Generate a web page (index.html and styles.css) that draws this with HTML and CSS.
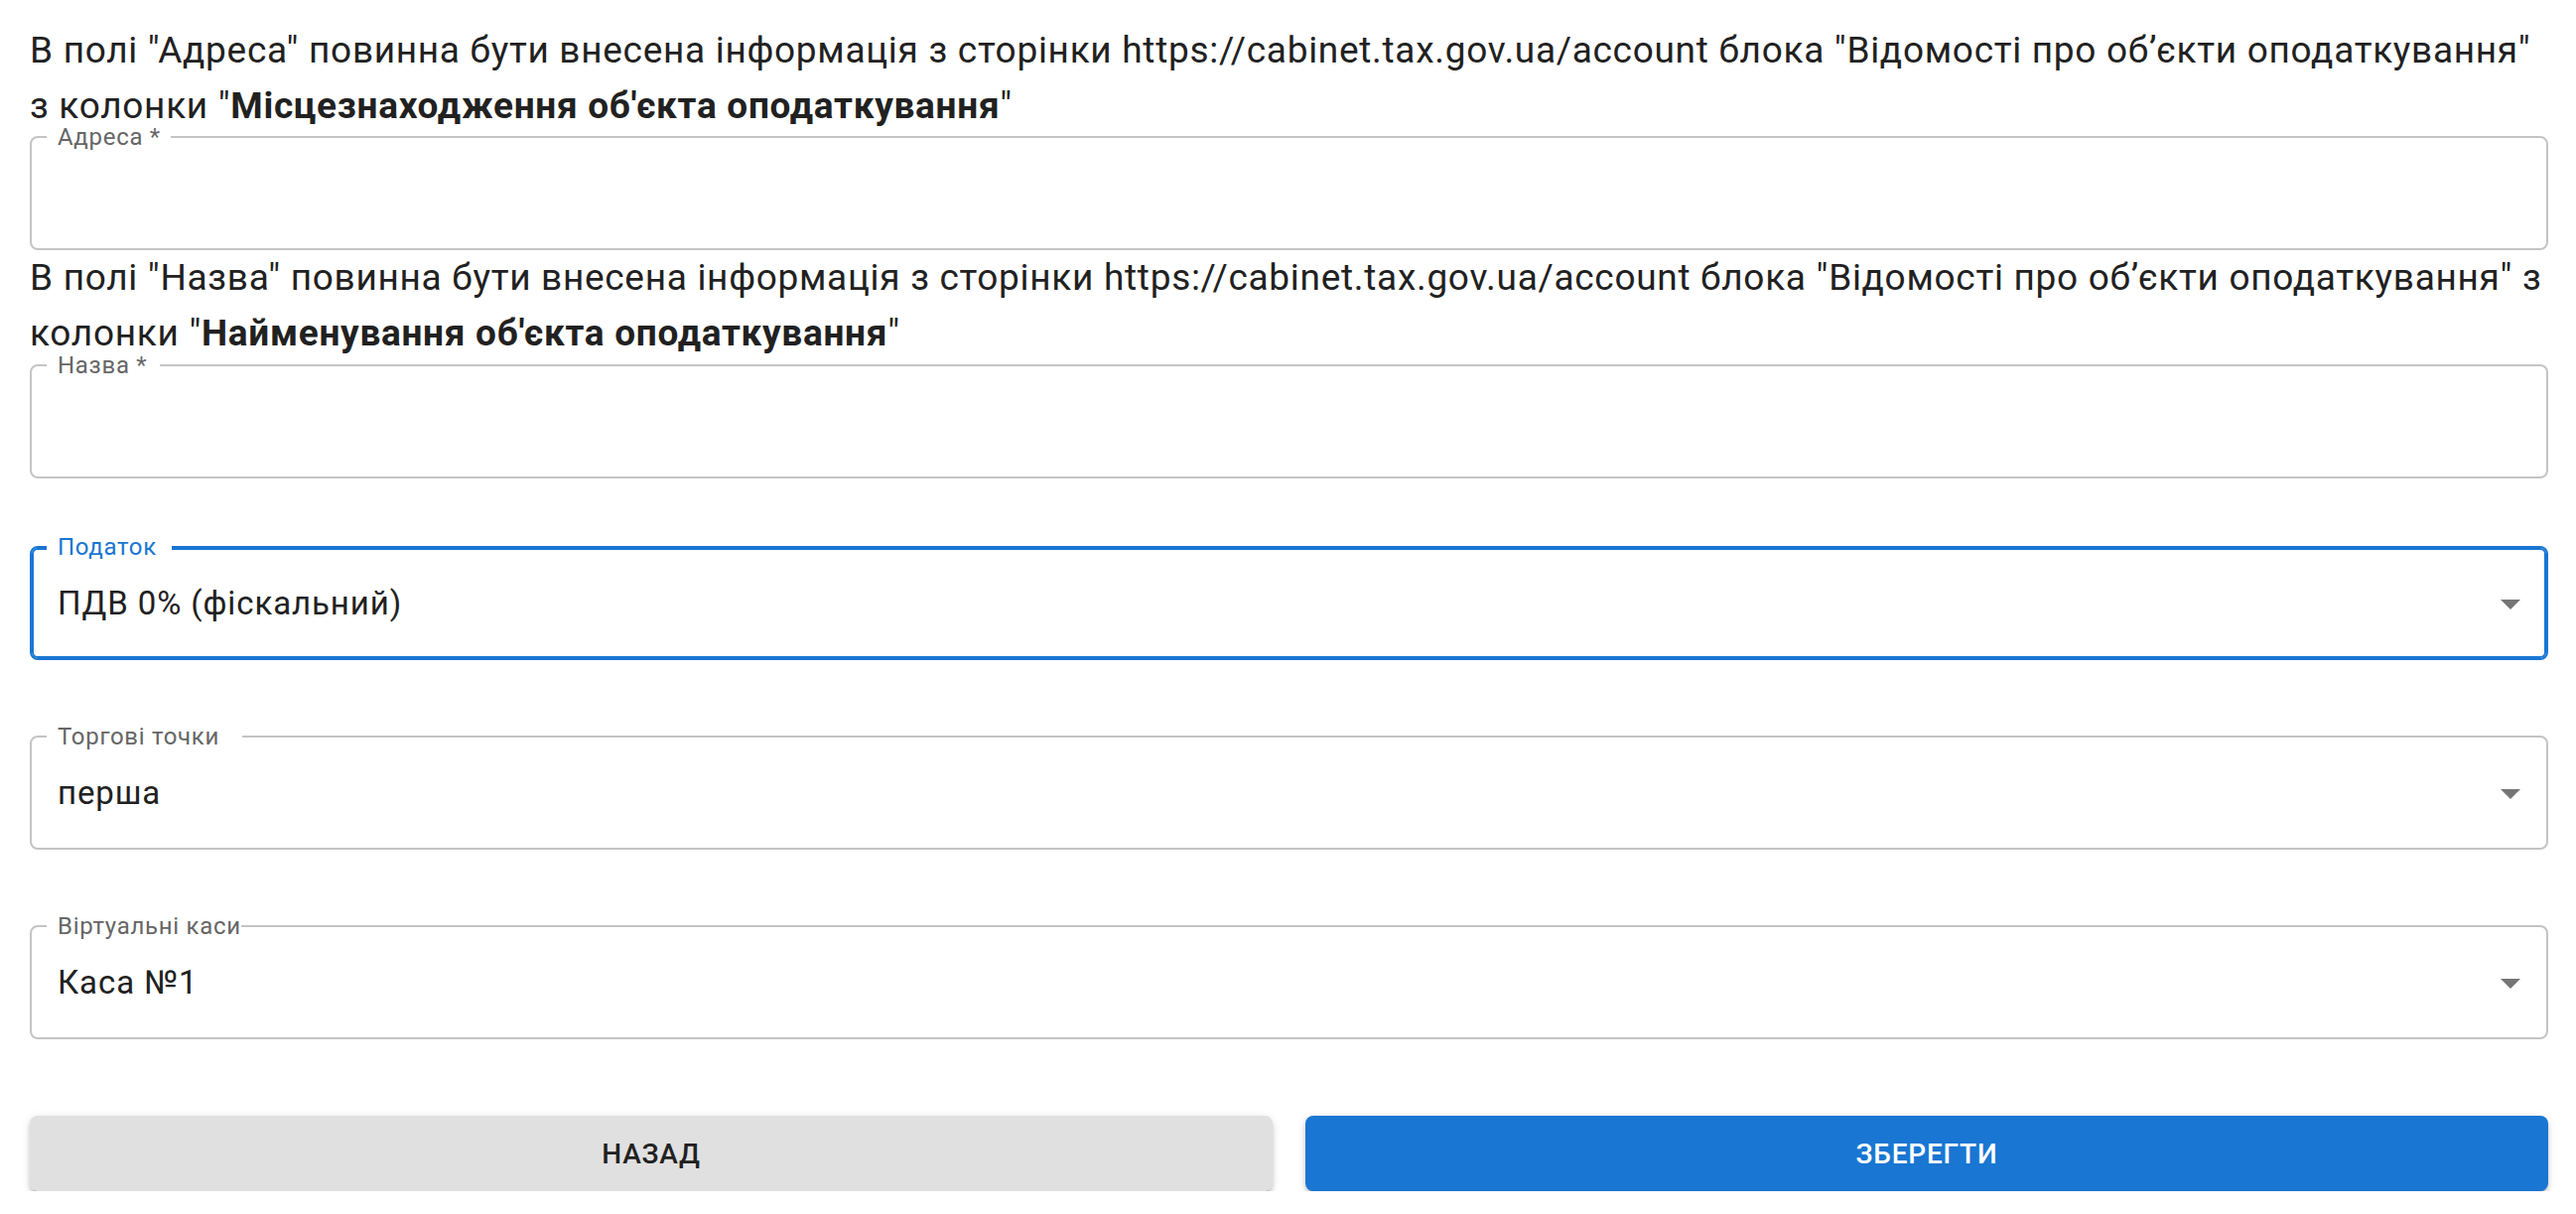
FILE: index.html
```html
<!DOCTYPE html>
<html lang="uk">
<head>
<meta charset="utf-8">
<title>Форма</title>
<link rel="stylesheet" href="styles.css">
</head>
<body>
<div class="page">
  <p class="hint">В полі "Адреса" повинна бути внесена інформація з сторінки https://cabinet.tax.gov.ua/account блока "Відомості про об’єкти оподаткування" з колонки "<b>Місцезнаходження об'єкта оподаткування</b>"</p>
  <div class="field field-tight">
    <span class="field-label label-pad-10">Адреса *</span>
  </div>

  <p class="hint">В полі "Назва" повинна бути внесена інформація з сторінки https://cabinet.tax.gov.ua/account блока "Відомості про об’єкти оподаткування" з колонки "<b>Найменування об'єкта оподаткування</b>"</p>
  <div class="field field-tight2">
    <span class="field-label label-pad-13">Назва *</span>
  </div>

  <div class="field select focused first-select">
    <span class="field-label label-pad-15">Податок</span>
    <span class="value">ПДВ 0% (фіскальний)</span>
    <svg class="arrow" viewBox="0 0 24 24" width="48" height="48"><path d="M7 10l5 5 5-5z"/></svg>
  </div>

  <div class="field select next-select">
    <span class="field-label label-pad-23">Торгові точки</span>
    <span class="value">перша</span>
    <svg class="arrow" viewBox="0 0 24 24" width="48" height="48"><path d="M7 10l5 5 5-5z"/></svg>
  </div>

  <div class="field select next-select">
    <span class="field-label label-pad-0">Віртуальні каси</span>
    <span class="value">Каса №1</span>
    <svg class="arrow" viewBox="0 0 24 24" width="48" height="48"><path d="M7 10l5 5 5-5z"/></svg>
  </div>

  <div class="actions">
    <button class="btn btn-grey" type="button">Назад</button>
    <button class="btn btn-primary" type="button">Зберегти</button>
  </div>
</div>
</body>
</html>
```

FILE: styles.css
```css
html, body {
  margin: 0;
  padding: 0;
  background: #ffffff;
}

body {
  font-family: Roboto, "Noto Sans", "Liberation Sans", sans-serif;
  color: #212121;
}

.page {
  padding: 23px 28px 0 30px;
}

.hint {
  margin: 0;
  font-size: 37px;
  line-height: 56px;
  letter-spacing: 0.7px;
  font-weight: 400;
}

.hint b {
  font-weight: 700;
}

.field {
  position: relative;
  box-sizing: border-box;
  height: 115px;
  border: 2px solid #c4c4c4;
  border-radius: 8px;
  display: flex;
  align-items: center;
  padding: 0 12px 0 26px;
}

.field-tight {
  margin-top: 2px;
}

.field-tight2 {
  margin-top: 3px;
}

.first-select {
  margin-top: 68px;
}

.next-select {
  margin-top: 76px;
}

.field-label {
  position: absolute;
  top: -13px;
  left: 15px;
  padding: 0 10px 0 11px;
  background: #ffffff;
  font-size: 24px;
  line-height: 24px;
  letter-spacing: 0.7px;
  color: #666666;
  white-space: nowrap;
}

.label-pad-10 { padding-right: 10px; }
.label-pad-13 { padding-right: 13px; }
.label-pad-15 { padding-right: 15px; }
.label-pad-23 { padding-right: 23px; }
.label-pad-0 { padding-right: 0; }

.focused {
  border-color: #1976d2;
  box-shadow: inset 0 0 0 2px #1976d2;
}

.focused .field-label {
  color: #1976d2;
}

.value {
  flex: 1;
  font-size: 33px;
  line-height: 46px;
  letter-spacing: 0.9px;
  color: #212121;
}

.arrow {
  flex: none;
  fill: #757575;
}

.actions {
  display: grid;
  grid-template-columns: 1fr 1fr;
  gap: 33px;
  margin-top: 77px;
}

.btn {
  height: 76px;
  border: none;
  border-radius: 8px;
  font-family: Roboto, "Noto Sans", "Liberation Sans", sans-serif;
  font-size: 28px;
  font-weight: 500;
  letter-spacing: 0.8px;
  text-transform: uppercase;
  box-shadow: 0 6px 2px -4px rgba(0,0,0,0.2), 0 4px 4px 0 rgba(0,0,0,0.14), 0 2px 10px 0 rgba(0,0,0,0.12);
  cursor: pointer;
}

.btn-grey {
  background: #e0e0e0;
  color: #212121;
}

.btn-primary {
  background: #1976d2;
  color: #ffffff;
}
```
